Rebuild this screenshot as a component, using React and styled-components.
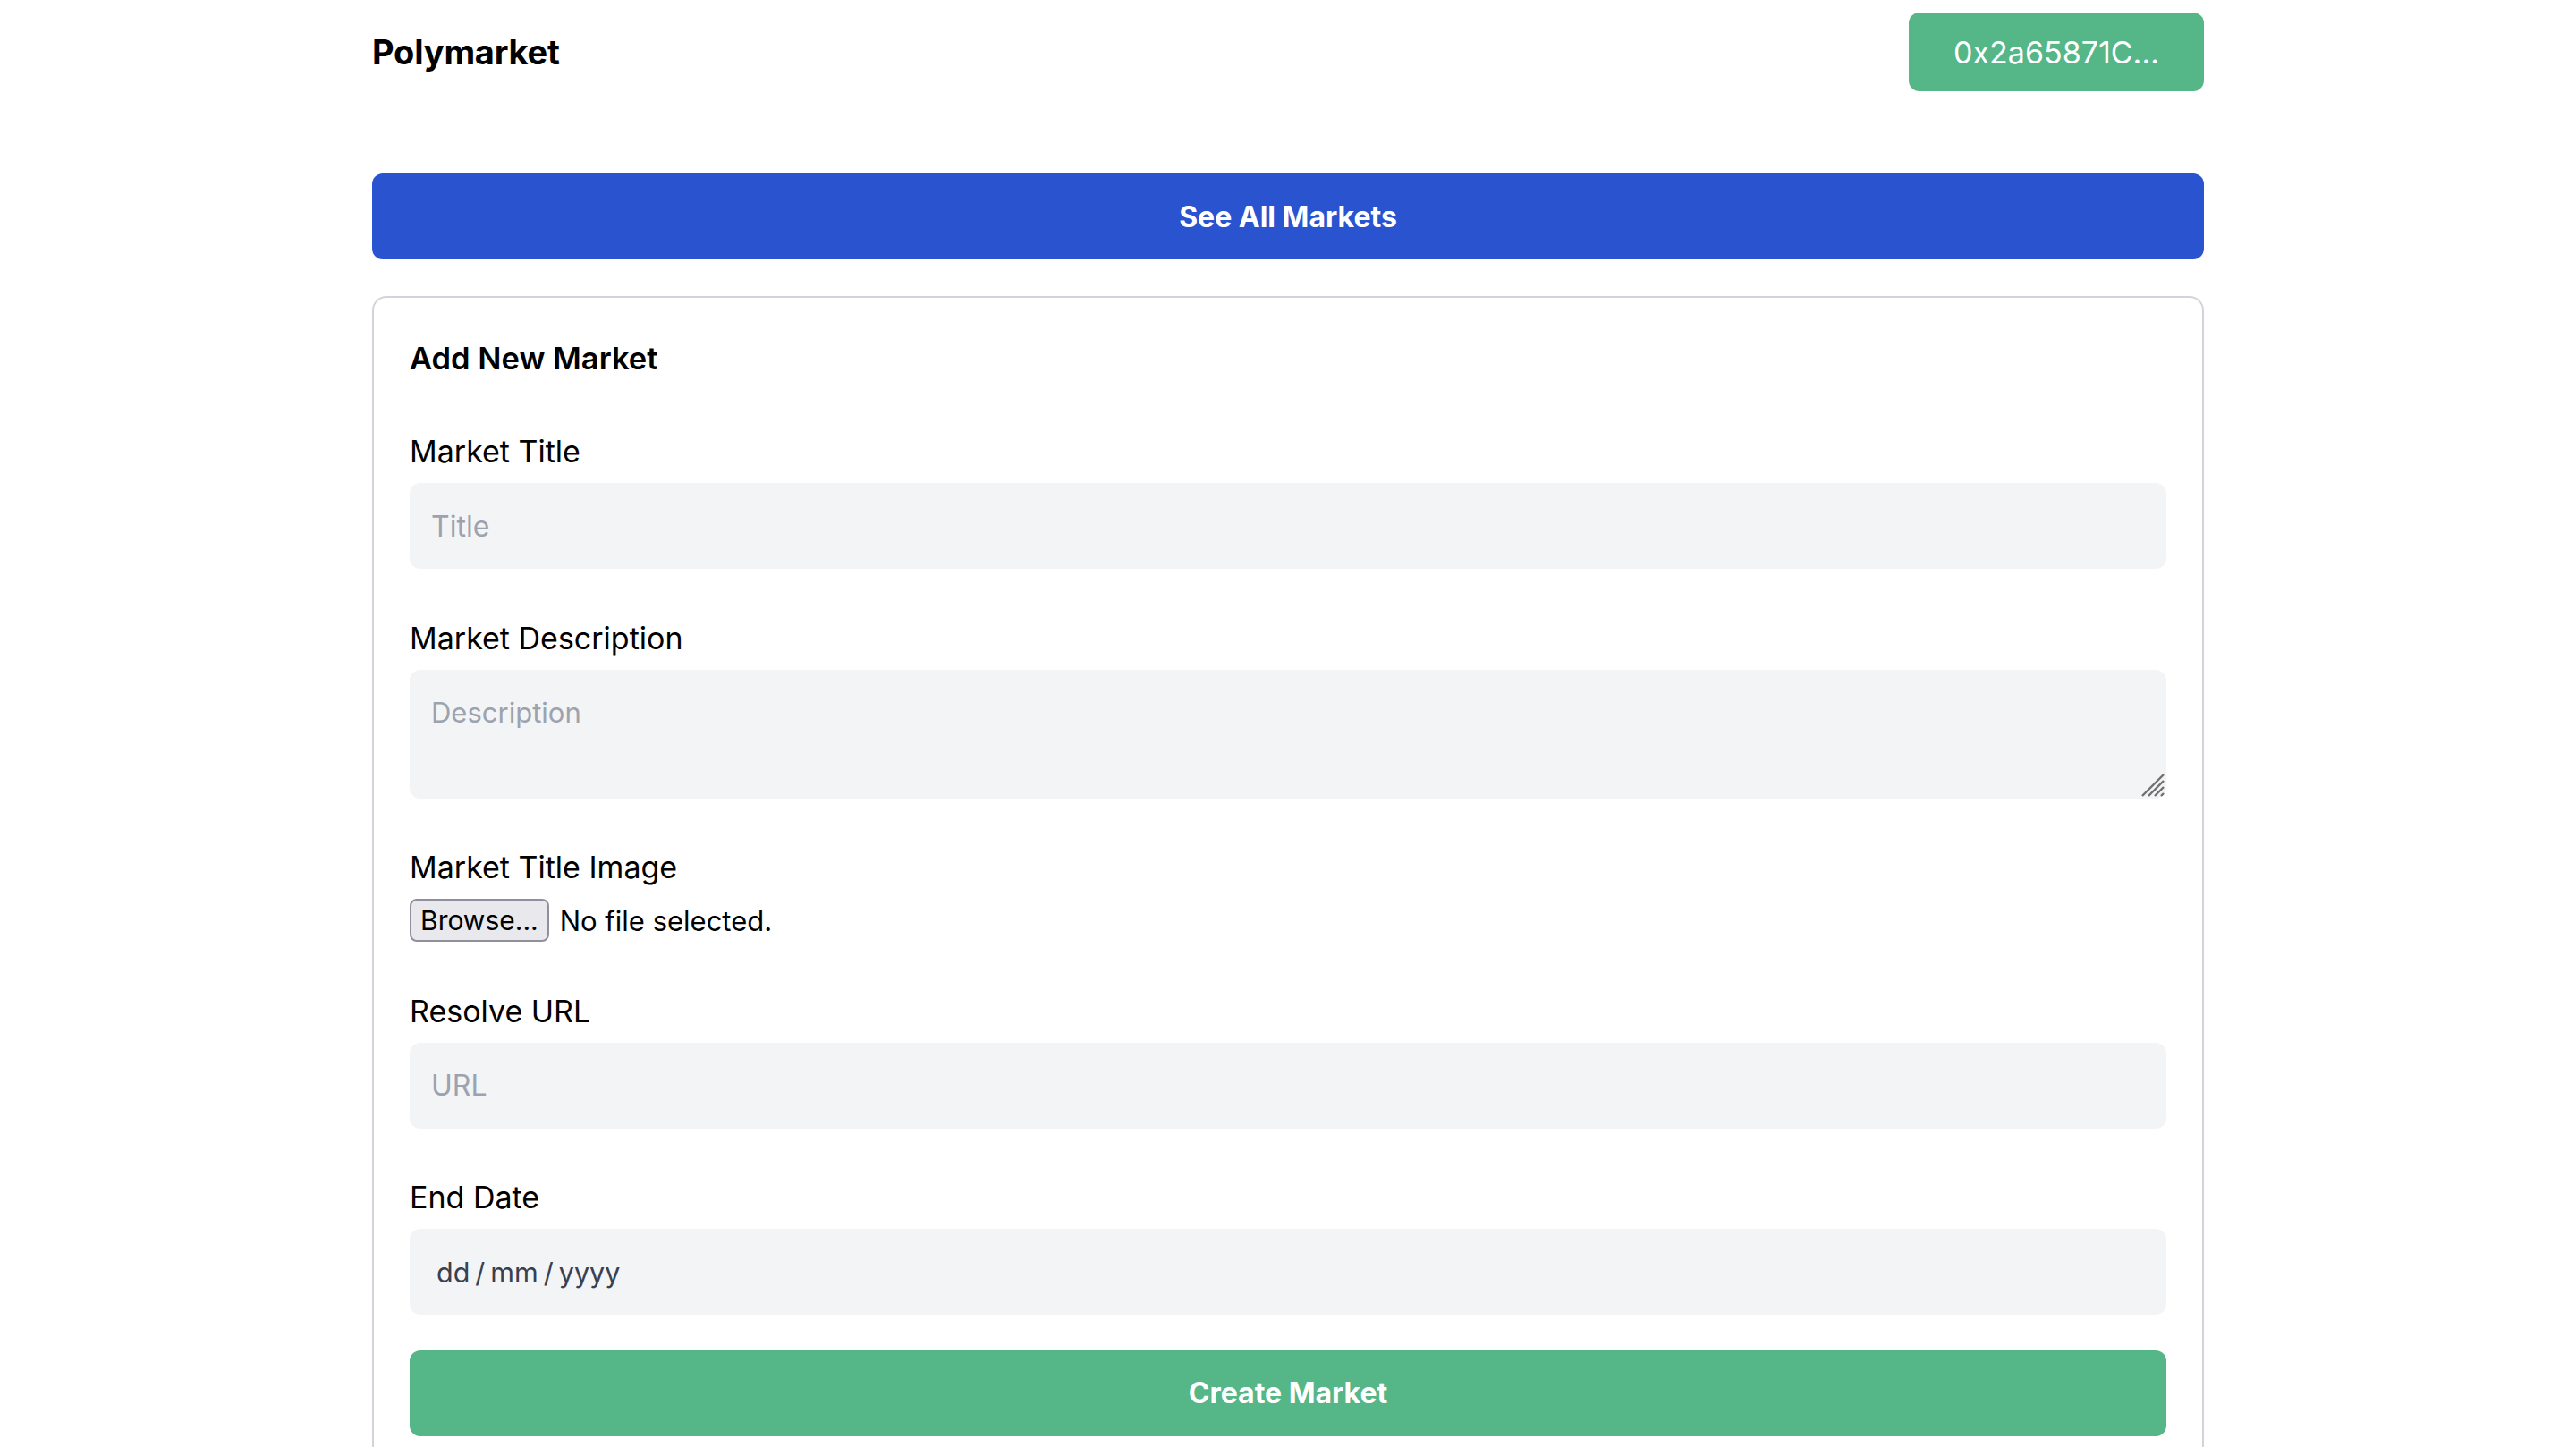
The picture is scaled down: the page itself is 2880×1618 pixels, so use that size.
import React from 'react';
import styled, { createGlobalStyle } from 'styled-components';

const GlobalStyle = createGlobalStyle`
  html, body {
    margin: 0;
    padding: 0;
    background: #ffffff;
    font-family: Inter, "Noto Sans", sans-serif;
    color: #000000;
  }
  * { box-sizing: border-box; }
`;

const Page = styled.div`
  width: 2048px;
  margin: 0 auto;
`;

const Header = styled.header`
  display: flex;
  justify-content: space-between;
  align-items: center;
  padding-top: 14px;
`;

const Brand = styled.div`
  font-size: 38px;
  font-weight: 700;
  line-height: 88px;
  letter-spacing: -0.2px;
`;

const WalletButton = styled.button`
  height: 88px;
  padding: 0 50px;
  border: none;
  border-radius: 12px;
  background: #55b687;
  color: #ffffff;
  font-family: inherit;
  font-size: 34px;
  font-weight: 400;
`;

const WideButton = styled.button`
  display: block;
  width: 100%;
  height: 96px;
  margin-top: ${p => p.$top || 0}px;
  border: none;
  border-radius: 12px;
  background: ${p => p.$bg};
  color: #ffffff;
  font-family: inherit;
  font-size: 32px;
  font-weight: 700;
`;

const Card = styled.section`
  margin-top: 41px;
  border: 2px solid #d1d5db;
  border-radius: 16px;
  padding: 40px;
`;

const CardTitle = styled.h2`
  margin: 0 0 38px;
  font-size: 34.5px;
  line-height: 56px;
  font-weight: 600;
`;

const Form = styled.div`
  display: flex;
  flex-direction: column;
  gap: 39.6px;
`;

const Field = styled.div`
  display: flex;
  flex-direction: column;
`;

const Label = styled.label`
  margin: 14px 0 11px;
  font-size: 34px;
  line-height: 48px;
`;

const TextInput = styled.input`
  height: 96px;
  padding: 0 24px;
  border: none;
  border-radius: 12px;
  background: #f3f4f6;
  font-family: inherit;
  font-size: 32px;
  color: #111827;
  outline: none;
  &::placeholder { color: #9ca3af; }
`;

const AreaWrap = styled.div`
  position: relative;
`;

const TextArea = styled.textarea`
  display: block;
  width: 100%;
  height: 144px;
  padding: 24px;
  border: none;
  border-radius: 12px;
  background: #f3f4f6;
  font-family: inherit;
  font-size: 31px;
  line-height: 48px;
  resize: none;
  outline: none;
  &::placeholder { color: #9ca3af; }
`;

const Grip = styled.svg`
  position: absolute;
  right: 2px;
  bottom: 2px;
  width: 26px;
  height: 26px;
`;

const FileRow = styled.div`
  display: flex;
  align-items: center;
  gap: 12px;
  height: 48px;
  font-size: 31px;
`;

const BrowseButton = styled.button`
  height: 48px;
  padding: 0 10px;
  border: 2px solid #8f8f9d;
  border-radius: 8px;
  background: #e9e9ed;
  color: #000000;
  font-family: inherit;
  font-size: 30px;
`;

const DateBox = styled.div`
  display: flex;
  align-items: center;
  gap: 6px;
  height: 96px;
  padding: 0 30px;
  border-radius: 12px;
  background: #f3f4f6;
  font-size: 30.5px;
  color: #374151;
`;

const ResizeGrip = () => (
  <Grip viewBox="0 0 26 26">
    {[1, 8, 15, 22].map(x => (
      <line key={x} x1={x} y1="25" x2="25" y2={x} stroke="#707070" strokeWidth="2.4" />
    ))}
  </Grip>
);

export default function App() {
  return (
    <Page>
      <GlobalStyle />
      <Header>
        <Brand>Polymarket</Brand>
        <WalletButton>0x2a65871C...</WalletButton>
      </Header>

      <WideButton $bg="#2953cf" $top={92}>See All Markets</WideButton>

      <Card>
        <CardTitle>Add New Market</CardTitle>
        <Form>
          <Field>
            <Label>Market Title</Label>
            <TextInput placeholder="Title" />
          </Field>
          <Field>
            <Label>Market Description</Label>
            <AreaWrap>
              <TextArea placeholder="Description" />
              <ResizeGrip />
            </AreaWrap>
          </Field>
          <Field>
            <Label>Market Title Image</Label>
            <FileRow>
              <BrowseButton>Browse...</BrowseButton>
              <span>No file selected.</span>
            </FileRow>
          </Field>
          <Field>
            <Label>Resolve URL</Label>
            <TextInput placeholder="URL" />
          </Field>
          <Field>
            <Label>End Date</Label>
            <DateBox>
              <span>dd</span>/<span>mm</span>/<span>yyyy</span>
            </DateBox>
          </Field>
          <WideButton $bg="#55b687">Create Market</WideButton>
        </Form>
      </Card>
    </Page>
  );
}
